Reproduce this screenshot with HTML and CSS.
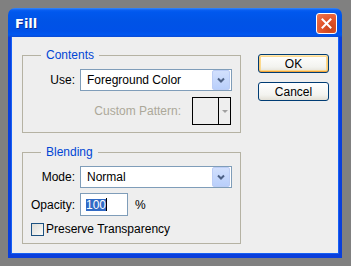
FILE: index.html
```html
<!DOCTYPE html>
<html>
<head>
<title>Fill</title>
<link rel="stylesheet" href="styles.css">
</head>
<body>
<div class="window">
  <div class="titlebar">
    <span class="title">Fill</span>
    <span class="close">
      <svg width="11" height="11" viewBox="0 0 11 11"><path d="M1.5 1.5 L9.5 9.5 M9.5 1.5 L1.5 9.5" stroke="#fff" stroke-width="2" stroke-linecap="square"/></svg>
    </span>
  </div>
  <div class="client">
    <div class="groups">
      <fieldset class="group">
        <legend>Contents</legend>
        <div class="field first">
          <label>Use:</label>
          <div class="select"><span class="value">Foreground Color</span><span class="drop"><svg width="8" height="6" viewBox="0 0 8 6"><path d="M1 1.5 L4 4.5 L7 1.5" fill="none" stroke="#4d6185" stroke-width="2"/></svg></span></div>
        </div>
        <div class="pattern-row">
          <span class="disabled">Custom Pattern:</span>
          <div class="pattern"><span class="swatch"></span><span class="pick"><i></i></span></div>
        </div>
      </fieldset>
      <fieldset class="group">
        <legend>Blending</legend>
        <div class="field first">
          <label>Mode:</label>
          <div class="select"><span class="value">Normal</span><span class="drop"><svg width="8" height="6" viewBox="0 0 8 6"><path d="M1 1.5 L4 4.5 L7 1.5" fill="none" stroke="#4d6185" stroke-width="2"/></svg></span></div>
        </div>
        <div class="field opacity">
          <label>Opacity:</label>
          <div class="amount"><div class="input"><span class="sel">100</span><span class="caret"></span></div><span class="unit">%</span></div>
        </div>
        <div class="check-row">
          <span class="checkbox"></span><span>Preserve Transparency</span>
        </div>
      </fieldset>
    </div>
    <div class="actions">
      <button class="btn default">OK</button>
      <button class="btn">Cancel</button>
    </div>
  </div>
</div>
</body>
</html>
```

FILE: styles.css
```css
body {background-color: #808080; margin: 0; font-family: "Liberation Sans", Arial, sans-serif; font-size: 12px; color: #000}

.window {width: 334px; height: 250px; margin: 8px; display: flex; flex-direction: column}

.titlebar {height: 29px; flex: none; display: flex; align-items: center; justify-content: space-between; padding: 1px 5px 0 7px; box-sizing: border-box;
  border-radius: 7px 7px 0 0;
  background: linear-gradient(to bottom, #3a8af9 0, #0a5ff2 2px, #0058ee 4px, #0053e6 45%, #0051e8 80%, #0057f0 92%, #0a4ad4 100%)}
.title {color: #fff; font-family: "DejaVu Sans", sans-serif; font-weight: bold; font-size: 13px; text-shadow: 1px 1px #0b2f9a}
.close {width: 21px; height: 21px; box-sizing: border-box; border: 1px solid #fff; border-radius: 3px; display: flex; align-items: center; justify-content: center;
  background: radial-gradient(circle at 70% 75%, #c8441a 0, #e2542a 45%, #f07a55 100%)}

.client {flex: 1; display: flex; background-color: #eeeeee; padding: 12px 10px 0 11px;
  border: 3px solid #0a3fdc; border-top: 0; border-bottom-width: 4px;
  box-shadow: inset 1px 0 #1560f5, inset -1px 0 #1560f5, inset 0 -1px #1560f5}

.groups {width: 219px; display: flex; flex-direction: column; gap: 13px}
.group {margin: 0; padding: 0 8px 7px 8px; border: 1px solid #b5b2a3; min-width: 0}
.group legend {margin-left: 10px; padding: 0 5px; line-height: 12px; color: #0046d5}

.field {display: grid; grid-template-columns: 44px 152px; column-gap: 5px; align-items: center}
.field label {justify-self: end}
.field.first {margin-top: 8px}
.field.opacity {margin-top: 5px}

.select {height: 22px; box-sizing: border-box; border: 1px solid #7f9db9; background: #fff; display: flex; align-items: center; justify-content: space-between; padding: 1px}
.select .value {padding-left: 5px}
.drop {width: 16px; height: 18px; border: 1px solid #bccdf5; border-radius: 2px; display: flex; align-items: center; justify-content: center;
  background: linear-gradient(to bottom, #d2e0fd, #b9cffb)}

.pattern-row {display: flex; justify-content: flex-end; align-items: center; gap: 11px; margin-top: 6px; padding-right: 1px}
.disabled {color: #aca899}
.pattern {width: 39px; height: 28px; box-sizing: border-box; border: 1px solid #000; display: flex}
.swatch {flex: 1; border-right: 1px solid #000}
.pick {width: 11px; display: flex; align-items: center; justify-content: center}
.pick i {border-left: 3px solid transparent; border-right: 3px solid transparent; border-top: 3px solid #a0a0a0}

.amount {display: flex; align-items: center}
.input {width: 48px; height: 23px; box-sizing: border-box; border: 1px solid #7f9db9; background: #fff; display: flex; align-items: center; padding-left: 5px}
.sel {background: #316ac5; color: #fff; line-height: 12px}
.caret {width: 1px; height: 13px; background: #000}
.unit {margin-left: 7px}

.check-row {display: flex; align-items: center; margin-top: 6px; gap: 2px}
.checkbox {width: 13px; height: 13px; box-sizing: border-box; border: 1px solid #1c5180; background: linear-gradient(135deg, #dcdcd7, #fbfbf9)}

.actions {margin-left: auto; padding-top: 5px; display: flex; flex-direction: column; gap: 9px}
.btn {width: 71px; height: 19px; padding: 0; font: inherit; color: #000; border: 1px solid #003c74; border-radius: 3px;
  background: linear-gradient(to bottom, #ffffff, #f3f3ef 70%, #e3e0d6)}
.btn.default {box-shadow: inset 0 1px #ffe7b0, inset 0 -1px #f1a43b, inset 1px 0 #fbcb75, inset -1px 0 #fbcb75, inset 0 0 0 2px #fcd98e}
```
